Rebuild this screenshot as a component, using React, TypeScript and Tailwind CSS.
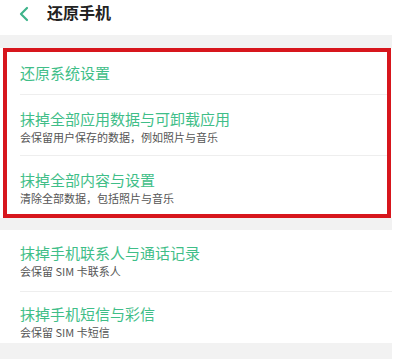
import React from 'react';

type Item = { title: string; desc?: string };

const font = { fontFamily: '"Noto Sans CJK SC", "Noto Sans", sans-serif' };

const Row: React.FC<{ item: Item; first?: boolean; last?: boolean; pad: string }> = ({ item, first, last, pad }) => {
  if (!item.desc) {
    return (
      <div className={`${pad} py-[11px]`}>
        <div className="text-[15px] leading-[20px] text-[#3fbe88]">{item.title}</div>
      </div>
    );
  }
  return (
    <div className={`${pad} ${first ? 'pt-[13px]' : last ? 'pt-[12px]' : 'pt-[14px]'}`}>
      <div className="text-[15px] leading-[20px] text-[#3fbe88]">{item.title}</div>
      <div className="text-[11px] leading-[17px] text-[#555555]">{item.desc}</div>
    </div>
  );
};

const App: React.FC = () => {
  return (
    <div className="w-[399px] h-[359px] bg-white overflow-hidden" style={font}>
      <div className="w-[392px]">
        {/* header */}
        <div className="h-[35px] flex items-start pt-[3px] bg-white">
          <svg width="12" height="16" viewBox="0 0 12 16" className="ml-[18px] mt-[3px]">
            <path d="M9 2 L3 8 L9 14" fill="none" stroke="#3eb38a" strokeWidth="2.2" strokeLinecap="round" strokeLinejoin="round" />
          </svg>
          <span className="ml-[17px] text-[16px] leading-[18px] font-bold text-[#222222]">还原手机</span>
        </div>

        <div className="h-[13px] bg-[#f2f2f2]" />

        {/* highlighted section */}
        <div className="ml-[3px] mr-[1px] border-4 border-[#d7161d] bg-white">
          <Row item={{ title: '还原系统设置' }} pad="pl-[13px]" />
          <div className="ml-[13px] h-px bg-[#eeeeee]" />
          <div className="pb-[9px]">
            <Row item={{ title: '抹掉全部应用数据与可卸载应用', desc: '会保留用户保存的数据，例如照片与音乐' }} pad="pl-[13px]" />
          </div>
          <div className="ml-[13px] h-px bg-[#eeeeee]" />
          <div className="pb-[7px]">
            <Row item={{ title: '抹掉全部内容与设置', desc: '清除全部数据，包括照片与音乐' }} pad="pl-[13px]" />
          </div>
        </div>

        <div className="h-[12px] bg-[#f2f2f2]" />

        <div className="bg-white">
          <div className="pb-[11px]">
            <Row first item={{ title: '抹掉手机联系人与通话记录', desc: '会保留 SIM 卡联系人' }} pad="pl-[20px]" />
          </div>
          <div className="ml-[20px] h-px bg-[#eeeeee]" />
          <div className="pb-[2px]">
            <Row last item={{ title: '抹掉手机短信与彩信', desc: '会保留 SIM 卡短信' }} pad="pl-[20px]" />
          </div>
        </div>

        <div className="h-[20px] bg-[#f2f2f2]" />
      </div>
    </div>
  );
};

export default App;
